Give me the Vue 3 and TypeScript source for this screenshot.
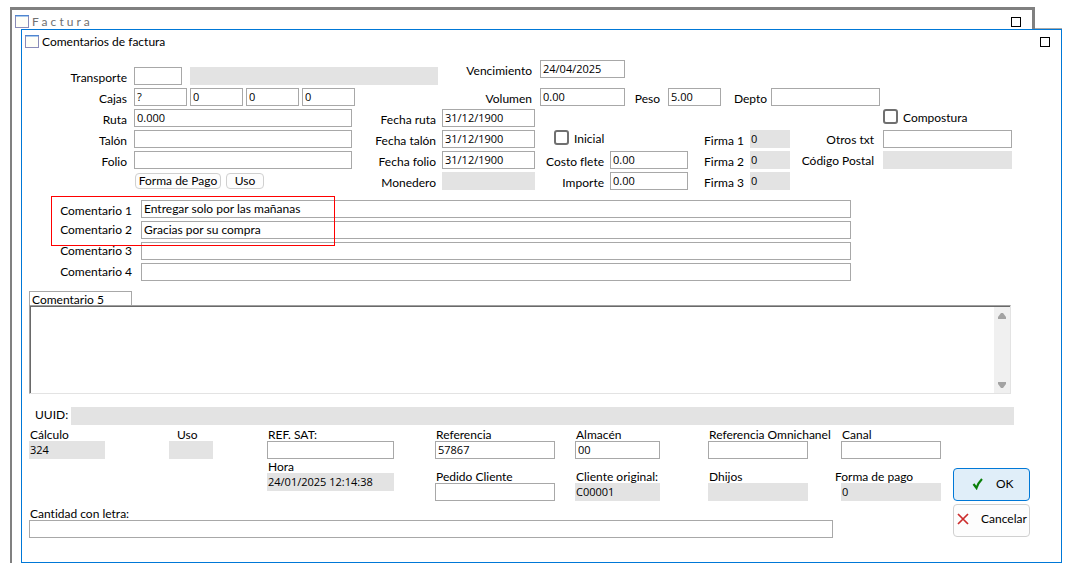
<script setup lang="ts">
import { reactive, ref } from 'vue'

interface Field {
  id: string
  label: string
  value: string
  readonly?: boolean
}

const transporte = reactive({ clave: '', nombre: '' })
const cajas = ref<string[]>(['?', '0', '0', '0'])

const envio = reactive<Field[]>([
  { id: 'ruta', label: 'Ruta', value: '0.000' },
  { id: 'talon', label: 'Talón', value: '' },
  { id: 'folio', label: 'Folio', value: '' },
])

const fechas = reactive<Field[]>([
  { id: 'fecha-ruta', label: 'Fecha ruta', value: '31/12/1900' },
  { id: 'fecha-talon', label: 'Fecha talón', value: '31/12/1900' },
  { id: 'fecha-folio', label: 'Fecha folio', value: '31/12/1900' },
  { id: 'monedero', label: 'Monedero', value: '', readonly: true },
])

const medidas = reactive({ vencimiento: '24/04/2025', volumen: '0.00', peso: '5.00', depto: '' })

const costos = reactive<Field[]>([
  { id: 'costo-flete', label: 'Costo flete', value: '0.00' },
  { id: 'importe', label: 'Importe', value: '0.00' },
])

const firmas = reactive<Field[]>([
  { id: 'firma-1', label: 'Firma 1', value: '0', readonly: true },
  { id: 'firma-2', label: 'Firma 2', value: '0', readonly: true },
  { id: 'firma-3', label: 'Firma 3', value: '0', readonly: true },
])

const otros = reactive<Field[]>([
  { id: 'otros-txt', label: 'Otros txt', value: '' },
  { id: 'codigo-postal', label: 'Código Postal', value: '', readonly: true },
])

const inicial = ref(false)
const compostura = ref(false)

const comentarios = reactive<Field[]>([
  { id: 'comentario-1', label: 'Comentario 1', value: 'Entregar solo por las mañanas' },
  { id: 'comentario-2', label: 'Comentario 2', value: 'Gracias por su compra' },
  { id: 'comentario-3', label: 'Comentario 3', value: '' },
  { id: 'comentario-4', label: 'Comentario 4', value: '' },
])
const comentario5 = ref('')
const uuid = ref('')

const columnas = reactive<{ name: string; fields: Field[] }[]>([
  { name: 'calculo', fields: [{ id: 'calculo', label: 'Cálculo', value: '324', readonly: true }] },
  { name: 'uso', fields: [{ id: 'uso', label: 'Uso', value: '', readonly: true }] },
  {
    name: 'sat',
    fields: [
      { id: 'ref-sat', label: 'REF. SAT:', value: '' },
      { id: 'hora', label: 'Hora', value: '24/01/2025 12:14:38', readonly: true },
    ],
  },
  {
    name: 'referencia',
    fields: [
      { id: 'referencia', label: 'Referencia', value: '57867' },
      { id: 'pedido', label: 'Pedido Cliente', value: '' },
    ],
  },
  {
    name: 'almacen',
    fields: [
      { id: 'almacen', label: 'Almacén', value: '00' },
      { id: 'cliente', label: 'Cliente original:', value: 'C00001', readonly: true },
    ],
  },
  {
    name: 'omni',
    fields: [
      { id: 'omni', label: 'Referencia Omnichanel', value: '' },
      { id: 'dhijos', label: 'Dhijos', value: '', readonly: true },
    ],
  },
  {
    name: 'canal',
    fields: [
      { id: 'canal', label: 'Canal', value: '' },
      { id: 'forma-pago', label: 'Forma de pago', value: '0', readonly: true },
    ],
  },
])
const cantidad = ref('')
</script>

<template>
  <div class="desktop">
    <section class="window back">
      <header class="titlebar">
        <svg class="win-icon" viewBox="0 0 14 13" aria-hidden="true">
          <rect x="0.5" y="0.5" width="13" height="12" fill="#fffff8" stroke="#8a8cb8" />
          <rect width="14" height="1" fill="#4f86d0" />
          <rect x="1" y="1" width="12" height="1" fill="#a9c8ee" />
        </svg>
        <span class="title">F a c t u r a</span>
        <button type="button" class="maximize" aria-label="Maximizar factura"></button>
      </header>
    </section>

    <form class="window front" @submit.prevent>
      <header class="titlebar">
        <svg class="win-icon" viewBox="0 0 14 13" aria-hidden="true">
          <rect x="0.5" y="0.5" width="13" height="12" fill="#fffff8" stroke="#8a8cb8" />
          <rect width="14" height="1" fill="#4f86d0" />
          <rect x="1" y="1" width="12" height="1" fill="#a9c8ee" />
        </svg>
        <span class="title">Comentarios de factura</span>
        <button type="button" class="maximize" aria-label="Maximizar comentarios"></button>
      </header>

      <div class="upper numeric">
        <div class="pairs transport">
          <label for="transporte">Transporte</label>
          <div class="carrier">
            <input id="transporte" v-model="transporte.clave" type="text" />
            <input v-model="transporte.nombre" type="text" readonly aria-label="Nombre del transporte" />
          </div>
          <label for="cajas-1">Cajas</label>
          <div class="boxes">
            <input
              v-for="(_, i) in cajas"
              :id="`cajas-${i + 1}`"
              :key="i"
              v-model="cajas[i]"
              type="text"
              :aria-label="`Cajas ${i + 1}`"
            />
          </div>
        </div>
        <div class="measures">
          <label for="vencimiento">Vencimiento</label>
          <input id="vencimiento" v-model="medidas.vencimiento" type="text" />
          <label for="volumen" class="volume">Volumen</label>
          <input id="volumen" v-model="medidas.volumen" type="text" />
          <label for="peso">Peso</label>
          <input id="peso" v-model="medidas.peso" type="text" />
          <label for="depto" class="close">Depto</label>
          <input id="depto" v-model="medidas.depto" type="text" />
        </div>
      </div>

      <div class="middle numeric">
        <div class="pairs shipping">
          <template v-for="f in envio" :key="f.id">
            <label :for="f.id">{{ f.label }}</label>
            <input :id="f.id" v-model="f.value" type="text" />
          </template>
          <div class="small-buttons">
            <button type="button" class="pay">Forma de Pago</button>
            <button type="button" class="use">Uso</button>
          </div>
        </div>

        <div class="pairs dates">
          <template v-for="f in fechas" :key="f.id">
            <label :for="f.id">{{ f.label }}</label>
            <input :id="f.id" v-model="f.value" type="text" :readonly="f.readonly" />
          </template>
        </div>

        <div class="pairs costs">
          <div class="check initial">
            <input id="inicial" v-model="inicial" type="checkbox" />
            <label for="inicial">Inicial</label>
          </div>
          <template v-for="f in costos" :key="f.id">
            <label :for="f.id">{{ f.label }}</label>
            <input :id="f.id" v-model="f.value" type="text" />
          </template>
        </div>

        <div class="pairs signatures">
          <template v-for="f in firmas" :key="f.id">
            <label :for="f.id">{{ f.label }}</label>
            <input :id="f.id" v-model="f.value" type="text" readonly />
          </template>
        </div>

        <div class="pairs others">
          <div class="check repair">
            <input id="compostura" v-model="compostura" type="checkbox" />
            <label for="compostura">Compostura</label>
          </div>
          <template v-for="f in otros" :key="f.id">
            <label :for="f.id">{{ f.label }}</label>
            <input :id="f.id" v-model="f.value" type="text" :readonly="f.readonly" />
          </template>
        </div>
      </div>

      <div class="comments">
        <template v-for="f in comentarios" :key="f.id">
          <label :for="f.id">{{ f.label }}</label>
          <input :id="f.id" v-model="f.value" type="text" />
        </template>
        <div class="highlight"></div>
      </div>

      <div class="notes">
        <label for="comentario-5" class="tab">Comentario 5</label>
        <div class="notes-frame">
          <textarea id="comentario-5" v-model="comentario5"></textarea>
          <div class="scroll" aria-hidden="true">
            <svg viewBox="0 0 8 6"><path d="M3 0h2l3 4v2H0V4z" fill="#a3a3a3" /></svg>
            <svg viewBox="0 0 8 6"><path d="M0 0h8v2L5 6H3L0 2z" fill="#a3a3a3" /></svg>
          </div>
        </div>
      </div>

      <div class="uuid">
        <label for="uuid">UUID:</label>
        <input id="uuid" v-model="uuid" type="text" readonly />
      </div>

      <div class="lower">
        <div class="details">
          <div class="columns numeric">
            <div v-for="c in columnas" :key="c.name" class="column" :class="c.name">
              <div v-for="f in c.fields" :key="f.id" class="stack" :class="f.id">
                <label :for="f.id">{{ f.label }}</label>
                <input :id="f.id" v-model="f.value" type="text" :readonly="f.readonly" />
              </div>
            </div>
          </div>
          <div class="stack amount">
            <label for="cantidad">Cantidad con letra:</label>
            <input id="cantidad" v-model="cantidad" type="text" />
          </div>
        </div>
        <div class="actions">
          <button type="submit" class="ok">
            <svg viewBox="0 0 12 12" aria-hidden="true">
              <path d="M1.500 6 4.500 10C5.500 7 7.500 3.500 10 1" fill="none" stroke="#0a800a" stroke-width="2.200" />
            </svg>
            <span>OK</span>
          </button>
          <button type="button" class="cancel">
            <svg viewBox="0 0 12 12" aria-hidden="true">
              <path d="M1 1 11 11M11 1 1 11" fill="none" stroke="#cc2c2c" stroke-width="1.700" />
            </svg>
            <span>Cancelar</span>
          </button>
        </div>
      </div>
    </form>
  </div>
</template>

<style>
body {
  margin: 0;
  background: #fff;
}
</style>

<style scoped>
.desktop {
  box-sizing: border-box;
  display: grid;
  min-height: 100vh;
  padding: 7px 10px 12px;
  color: #000;
  font-family: Lato, "Open Sans", sans-serif;
  font-size: 12px;
  font-variant-ligatures: none;
  line-height: 18px;
}

.desktop *,
.desktop *::before {
  box-sizing: border-box;
}

.window {
  grid-area: 1 / 1;
  background: #fff;
}

.back {
  margin-right: 27px;
  border: solid #808080;
  border-width: 3px 3px 0 2px;
  color: #707070;
}

.front {
  position: relative;
  margin: 22px 0 0 11px;
  border: 1px solid #0078d7;
}

.front::before {
  content: "";
  position: absolute;
  top: -2px;
  right: -1px;
  width: 27px;
  height: 1px;
  background: #a8a8a8;
}

.titlebar {
  display: flex;
  align-items: center;
  gap: 3px;
  height: 23px;
  padding: 0 11px 0 3px;
}

.win-icon {
  width: 14px;
  height: 13px;
}

.title {
  flex: 1;
  white-space: nowrap;
}

.maximize {
  width: 10px;
  height: 10px;
  padding: 0;
  border: 1px solid #000;
  background: #fff;
}

label {
  white-space: nowrap;
}

input,
textarea,
button {
  margin: 0;
  color: inherit;
  font: inherit;
  font-variant-ligatures: none;
}

input[type="text"] {
  width: 100%;
  min-width: 0;
  height: 18px;
  padding: 0 2px 2px;
  border: 1px solid #a8a8a8;
  border-radius: 0;
  background: #fff;
  line-height: 14px;
  outline: none;
}

.numeric input[type="text"] {
  font-family: "Open Sans", "Noto Sans", sans-serif;
  font-size: 11px;
}

input[type="text"][readonly] {
  padding: 0 0 2px;
  border-color: #e3e3e3;
  background: #e3e3e3;
}

input[type="checkbox"] {
  appearance: none;
  width: 15px;
  height: 15px;
  border: 2px solid #707070;
  border-radius: 3px;
  background: #fff;
}

input[type="checkbox"]:checked {
  background: #0078d7;
}

.upper {
  display: grid;
  grid-template-columns: 416fr 442fr;
  align-items: end;
  margin: 7px 181px 3px 0;
}

.pairs {
  display: grid;
  row-gap: 3px;
}

.pairs > label,
.measures > label {
  height: 18px;
  padding: 2px 6px 0 0;
  text-align: right;
}

.transport,
.shipping {
  grid-template-columns: 112px minmax(0, 1fr);
}

.transport > label,
.shipping > label {
  padding-right: 7px;
}

.carrier {
  display: grid;
  grid-template-columns: 48px minmax(0, 1fr);
  gap: 8px;
}

.boxes {
  display: grid;
  grid-template-columns: repeat(4, 53px);
  gap: 3px;
}

.measures {
  display: grid;
  grid-template-columns: 102fr 85fr 43fr 53fr 50fr 109fr;
  row-gap: 10px;
}

.measures > label {
  padding-right: 8px;
}

.measures > label.volume {
  grid-column: 1;
}

.measures > label.close {
  padding-right: 4px;
}

.middle {
  display: grid;
  grid-template-columns: 330fr 183fr 153fr 102fr 222fr;
  align-items: end;
  margin-right: 49px;
}

.small-buttons {
  grid-column: 2;
  display: flex;
  align-items: center;
  gap: 5px;
  height: 18px;
  padding-left: 1px;
}

.small-buttons button {
  height: 16px;
  padding: 0;
  border: 1px solid #d0d0d0;
  border-radius: 4px;
  background: #fdfdfd;
  line-height: 14px;
  white-space: nowrap;
}

.pay {
  width: 86px;
}

.use {
  width: 38px;
}

.dates {
  grid-template-columns: 90px minmax(0, 1fr);
}

.costs {
  grid-template-columns: 75px minmax(0, 1fr);
}

.signatures {
  grid-template-columns: 62px minmax(0, 1fr);
}

.others {
  grid-template-columns: 93px minmax(0, 1fr);
  align-self: start;
}

.others > label {
  padding: 1px 9px 0 0;
}

.check {
  display: flex;
  gap: 5px;
  height: 18px;
}

.initial {
  grid-column: 1 / -1;
  padding-left: 19px;
}

.repair {
  grid-column: 2;
}

.comments {
  position: relative;
  display: grid;
  grid-template-columns: 119px minmax(0, 1fr);
  row-gap: 3px;
  margin: 10px 210px 0 0;
}

.comments label {
  padding-right: 9px;
  text-align: right;
}

.comments label:first-child {
  padding-top: 2px;
  height: 18px;
}

.highlight {
  position: absolute;
  top: -4px;
  left: 29px;
  width: 284px;
  height: 50px;
  border: 1px solid #f00;
  pointer-events: none;
}

.notes {
  margin: 10px 50px 0 7px;
}

.tab {
  display: block;
  width: 103px;
  height: 14px;
  padding-left: 2px;
  border: 1px solid #a8a8a8;
  border-bottom: 0;
  line-height: 16px;
}

.notes-frame {
  display: flex;
  height: 89px;
  border: 1px solid #a0a0a0;
  border-right-color: #e3e3e3;
  border-bottom-color: #e3e3e3;
}

textarea {
  flex: 1;
  min-width: 0;
  padding: 2px;
  border: solid #696969;
  border-width: 1px 0 0 1px;
  border-radius: 0;
  background: #fff;
  outline: none;
  resize: none;
}

.scroll {
  display: flex;
  flex-direction: column;
  align-items: center;
  justify-content: space-between;
  width: 16px;
  padding: 6px 0 5px;
  border-top: 1px solid #696969;
  background: #f0f0f0;
}

.scroll svg {
  width: 8px;
  height: 6px;
}

.uuid {
  display: grid;
  grid-template-columns: 36px minmax(0, 1fr);
  margin: 13px 47px 0 13px;
}

.uuid label {
  line-height: 16px;
}

.lower {
  display: flex;
  align-items: flex-end;
  gap: 12px;
  margin: 3px 31px 24px 7px;
}

.details {
  flex: 1;
  min-width: 0;
}

.columns {
  display: grid;
  grid-template-columns: 140fr 98fr 168fr 140fr 133fr 127fr 106fr;
}

.column {
  display: flex;
  flex-direction: column;
  gap: 11px;
  min-width: 0;
}

.stack {
  display: flex;
  flex-direction: column;
}

.stack label {
  height: 13px;
  padding-left: 1px;
  line-height: 13px;
}

.calculo.column {
  padding-right: 64px;
}

.uso.column {
  padding-right: 54px;
}

.uso label {
  padding-left: 8px;
}

.sat {
  gap: 1px;
  padding-right: 41px;
}

.referencia.column {
  padding-right: 20px;
}

.almacen.column {
  padding-right: 48px;
}

.omni.column {
  padding-right: 27px;
}

.stack.canal,
.stack.forma-pago input {
  margin-left: 6px;
}

.stack.forma-pago input {
  width: auto;
}

.stack.forma-pago label {
  padding-left: 0;
}

.amount {
  margin: 6px 108px 0 0;
}

.actions {
  display: flex;
  flex-direction: column;
  gap: 3px;
  width: 77px;
  margin-bottom: 1px;
}

.actions button {
  display: flex;
  align-items: center;
  height: 33px;
  border: 1px solid #d0d0d0;
  border-radius: 4px;
  background: #fdfdfd;
}

.actions svg {
  flex: none;
  width: 12px;
  height: 12px;
}

.actions .ok {
  gap: 12px;
  padding: 0 0 2px 18px;
  border-color: #0078d7;
  background: #e0eef9;
}

.actions .cancel {
  gap: 12px;
  padding: 0 0 3px 3px;
}
</style>
